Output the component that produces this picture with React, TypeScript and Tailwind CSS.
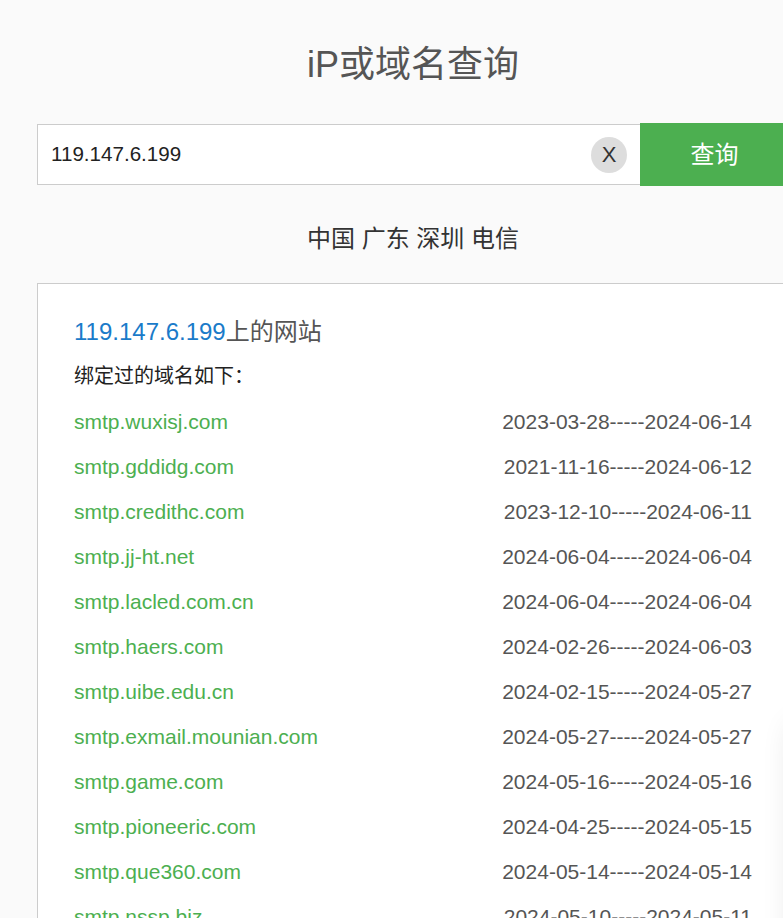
import React from 'react';

const font = { fontFamily: '"Liberation Sans", "Noto Sans CJK SC", sans-serif' };

const domains = [
  { name: 'smtp.wuxisj.com', from: '2023-03-28', to: '2024-06-14' },
  { name: 'smtp.gddidg.com', from: '2021-11-16', to: '2024-06-12' },
  { name: 'smtp.credithc.com', from: '2023-12-10', to: '2024-06-11' },
  { name: 'smtp.jj-ht.net', from: '2024-06-04', to: '2024-06-04' },
  { name: 'smtp.lacled.com.cn', from: '2024-06-04', to: '2024-06-04' },
  { name: 'smtp.haers.com', from: '2024-02-26', to: '2024-06-03' },
  { name: 'smtp.uibe.edu.cn', from: '2024-02-15', to: '2024-05-27' },
  { name: 'smtp.exmail.mounian.com', from: '2024-05-27', to: '2024-05-27' },
  { name: 'smtp.game.com', from: '2024-05-16', to: '2024-05-16' },
  { name: 'smtp.pioneeric.com', from: '2024-04-25', to: '2024-05-15' },
  { name: 'smtp.que360.com', from: '2024-05-14', to: '2024-05-14' },
  { name: 'smtp.nssp.biz', from: '2024-05-10', to: '2024-05-11' },
];

export default function App() {
  return (
    <div className="relative h-screen overflow-hidden bg-[#fafafa]" style={font}>
      <div className="ml-[37px] w-[752px] pt-[38px]">
        <h1 className="text-center text-[36px] leading-[54px] text-[#555]">iP或域名查询</h1>

        <div className="mt-[31px] flex items-center">
          <div className="flex h-[61px] flex-1 items-center border border-r-0 border-[#ccc] bg-white pl-[13px] pr-[13px]">
            <span className="flex-1 text-[20.6px] text-[#222]">119.147.6.199</span>
            <button className="flex h-[36px] w-[36px] items-center justify-center rounded-full bg-[#ddd] text-[22px] leading-none text-[#333]">
              X
            </button>
          </div>
          <button className="h-[63px] w-[149px] bg-[#4caf50] text-[24px] text-white">查询</button>
        </div>

        <p className="mt-[35px] text-center text-[24px] leading-[36px] text-[#333]">中国 广东 深圳 电信</p>

        <div className="mt-[26px] border border-[#ccc] bg-white px-[36px] pt-[30px] pb-[20px]">
          <h2 className="text-[24px] leading-[36px]">
            <span className="text-[#1a7bc9]">119.147.6.199</span>
            <span className="text-[#555]">上的网站</span>
          </h2>
          <p className="mt-[11px] text-[20px] leading-[30px] text-[#222]">绑定过的域名如下：</p>
          <ul className="mt-[8px]">
            {domains.map((d) => (
              <li key={d.name} className="flex h-[45px] items-center justify-between text-[21px]">
                <span className="text-[#4caf50]">{d.name}</span>
                <span className="text-[#555]">
                  {d.from}-----{d.to}
                </span>
              </li>
            ))}
          </ul>
        </div>
      </div>

      {/* floating panel peeking from the right edge */}
      <div className="absolute left-[792px] top-[725px] h-[400px] w-[120px] bg-white shadow-[0_0_28px_rgba(0,0,0,0.12)]" />
    </div>
  );
}
